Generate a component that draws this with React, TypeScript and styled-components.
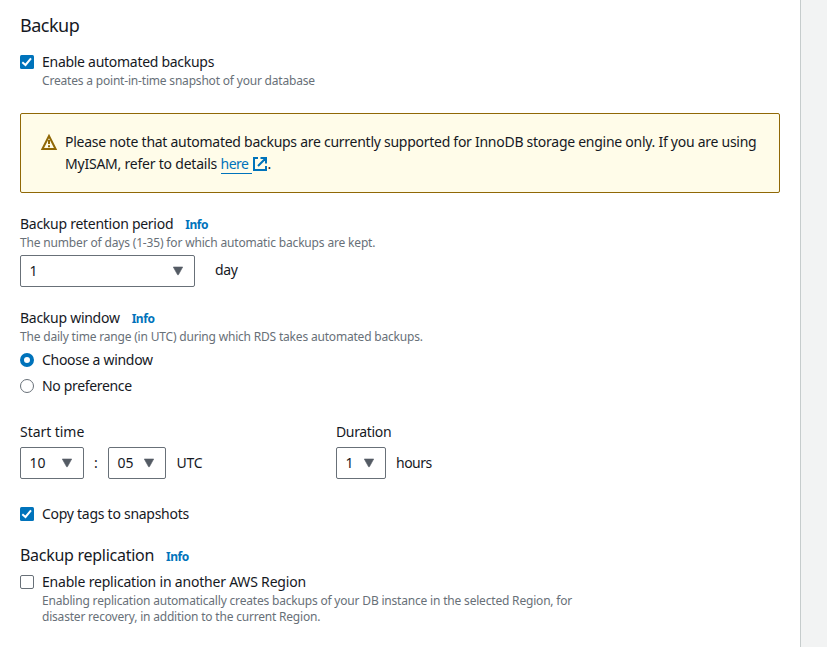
import React from "react";
import styled, { createGlobalStyle } from "styled-components";

const GlobalStyle = createGlobalStyle`
  * { box-sizing: border-box; }
  body {
    margin: 0;
    background: #f2f3f3;
    color: #16191f;
    font: 14px/22px "Noto Sans", sans-serif;
    overflow: hidden;
  }
`;

const Panel = styled.main`
  width: 801px;
  height: 647px;
  padding: 14px 20px 0;
  background: #fff;
  border-right: 1px solid #c6cccc;
  white-space: nowrap;
`;

const Text = styled.span<{ $track?: number }>`
  letter-spacing: ${(p) => p.$track ?? 0}px;
`;

const Title = styled.h2`
  margin: 0 0 15px;
  font-size: 18px;
  line-height: 22px;
  font-weight: 400;
`;

const Heading = styled.h3`
  display: flex;
  margin: 0 0 5px;
  font-size: 16px;
  line-height: 22px;
  font-weight: 400;
`;

const Option = styled.label<{ $gap?: number }>`
  display: flex;
  align-items: flex-start;
  gap: 8px;
  margin-bottom: ${(p) => p.$gap ?? 0}px;
`;

const OptionBody = styled.span`
  display: flex;
  flex-direction: column;
`;

const Mark = styled.svg`
  display: block;
  flex: none;
  width: 14px;
  height: 14px;
  margin-top: 4px;
`;

const Hint = styled.span`
  display: block;
  color: #687078;
  font-size: 12px;
  line-height: 16px;
`;

const Alert = styled.section`
  display: flex;
  height: 80px;
  margin: 24px 0 20px;
  padding: 17px 19px;
  gap: 7px;
  border: 1px solid #906806;
  border-radius: 2px;
  background: #fffce9;
`;

const AlertIcon = styled.svg`
  flex: none;
  width: 18px;
  height: 18px;
  margin-top: 2px;
`;

const AlertLine = styled.div`
  display: flex;
  height: 22px;
  white-space: pre;
`;

const Link = styled.a`
  display: flex;
  color: #0073bb;
`;

const LinkText = styled.span`
  width: 31px;
  height: 21px;
  border-bottom: 1px solid #0073bb;
`;

const ExternalIcon = styled.svg`
  width: 16px;
  height: 16px;
  margin-top: 3px;
`;

const FieldLabel = styled.div`
  display: flex;
  height: 22px;
`;

const Info = styled.a<{ $line?: number }>`
  margin-left: 12px;
  color: #0073bb;
  font-size: 12px;
  font-weight: 700;
  line-height: ${(p) => p.$line ?? 24}px;
  height: 22px;
  letter-spacing: -0.45px;
`;

const Controls = styled.div`
  display: flex;
  align-items: center;
  height: 32px;
  margin-top: 4px;
`;

const SelectBox = styled.button<{ $width: number }>`
  display: flex;
  align-items: center;
  justify-content: space-between;
  width: ${(p) => p.$width}px;
  height: 32px;
  padding: 0 10px 0 8.5px;
  border: 1px solid #687078;
  border-radius: 2px;
  background: #fff;
  color: #16191f;
  font: inherit;
`;

const Arrow = styled.svg`
  display: block;
  width: 12px;
  height: 10px;
`;

const Unit = styled.span<{ $left: number; $raise?: number }>`
  margin-left: ${(p) => p.$left}px;
  margin-bottom: ${(p) => p.$raise ?? 0}px;
`;

const Colon = styled.span`
  width: 24px;
  text-align: center;
`;

const TimeGrid = styled.div`
  display: grid;
  grid-template-columns: 316px 1fr;
  margin: 24px 0;
`;

const Field = styled.div<{ $bottom?: number }>`
  margin-bottom: ${(p) => p.$bottom ?? 0}px;
`;

function Checkbox({ checked }: { checked?: boolean }) {
  return (
    <Mark viewBox="0 0 14 14">
      {checked ? (
        <>
          <rect width="14" height="14" rx="1.5" fill="#0073bb" />
          <path d="M2.3 7.2 5.5 10 11 3.4" fill="none" stroke="#fff" strokeWidth="2" />
        </>
      ) : (
        <rect x=".5" y=".5" width="13" height="13" rx="1.5" fill="#fff" stroke="#687078" />
      )}
    </Mark>
  );
}

function Radio({ checked }: { checked?: boolean }) {
  return (
    <Mark viewBox="0 0 14 14">
      {checked ? (
        <circle cx="7" cy="7" r="5" fill="#fff" stroke="#0073bb" strokeWidth="4" />
      ) : (
        <circle cx="7" cy="7" r="6.5" fill="#fff" stroke="#687078" />
      )}
    </Mark>
  );
}

function Select({ value, width }: { value: string; width: number }) {
  return (
    <SelectBox type="button" $width={width}>
      <Text>{value}</Text>
      <Arrow viewBox="0 0 12 10">
        <path d="M1.3 1h9.4L6.4 8.8h-.8z" fill="#545b64" stroke="#545b64" strokeWidth=".6" strokeLinejoin="round" />
      </Arrow>
    </SelectBox>
  );
}

export default function App() {
  return (
    <>
      <GlobalStyle />
      <Panel>
        <Title><Text $track={-0.5}>Backup</Text></Title>
        <Option>
          <Checkbox checked />
          <OptionBody>
            <Text $track={-0.28}>Enable automated backups</Text>
            <Hint><Text $track={-0.19}>Creates a point-in-time snapshot of your database</Text></Hint>
          </OptionBody>
        </Option>

        <Alert>
          <AlertIcon viewBox="0 0 18 18" fill="none" stroke="#906806">
            <path d="M9 3 2.4 16h13.2z" strokeWidth="2" />
            <path d="M9 7v4M9 12.2v2" strokeWidth="2" />
          </AlertIcon>
          <div>
            <AlertLine>
              <Text $track={-0.266}>Please note that automated backups are currently supported for InnoDB storage engine only. If you are using</Text>
            </AlertLine>
            <AlertLine>
              <Text $track={-0.22}>MyISAM, refer to details </Text>
              <Link>
                <LinkText><Text $track={-0.5}>here</Text></LinkText>
                <ExternalIcon viewBox="0 0 16 16" fill="none" stroke="#0073bb" strokeWidth="2">
                  <path d="M6 2H2v12h12v-4M8.5 2H14v5.5M13.5 2.5 6 10" />
                </ExternalIcon>
              </Link>
              <Text>.</Text>
            </AlertLine>
          </div>
        </Alert>

        <Field $bottom={20}>
          <FieldLabel><Text $track={-0.27}>Backup retention period</Text><Info>Info</Info></FieldLabel>
          <Hint><Text $track={-0.165}>The number of days (1-35) for which automatic backups are kept.</Text></Hint>
          <Controls>
            <Select value="1" width={175} />
            <Unit $left={20} $raise={2}><Text $track={-0.3}>day</Text></Unit>
          </Controls>
        </Field>

        <Field $bottom={4}>
          <FieldLabel><Text $track={-0.27}>Backup window</Text><Info>Info</Info></FieldLabel>
          <Hint><Text $track={-0.19}>The daily time range (in UTC) during which RDS takes automated backups.</Text></Hint>
        </Field>
        <Option $gap={4}><Radio checked /><Text $track={-0.3}>Choose a window</Text></Option>
        <Option><Radio /><Text $track={-0.34}>No preference</Text></Option>

        <TimeGrid>
          <div>
            <FieldLabel><Text $track={-0.05}>Start time</Text></FieldLabel>
            <Controls>
              <Select value="10" width={64} />
              <Colon>:</Colon>
              <Select value="05" width={58} />
              <Unit $left={10.5}><Text $track={-0.3}>UTC</Text></Unit>
            </Controls>
          </div>
          <div>
            <FieldLabel><Text $track={-0.35}>Duration</Text></FieldLabel>
            <Controls>
              <Select value="1" width={50} />
              <Unit $left={10}><Text $track={-0.5}>hours</Text></Unit>
            </Controls>
          </div>
        </TimeGrid>

        <Option $gap={19}><Checkbox checked /><Text $track={-0.27}>Copy tags to snapshots</Text></Option>

        <Heading><Text $track={-0.28}>Backup replication</Text><Info $line={26}>Info</Info></Heading>
        <Option>
          <Checkbox />
          <OptionBody>
            <Text $track={-0.2}>Enable replication in another AWS Region</Text>
            <Hint><Text $track={-0.188}>Enabling replication automatically creates backups of your DB instance in the selected Region, for</Text></Hint>
            <Hint><Text $track={-0.2}>disaster recovery, in addition to the current Region.</Text></Hint>
          </OptionBody>
        </Option>
      </Panel>
    </>
  );
}
